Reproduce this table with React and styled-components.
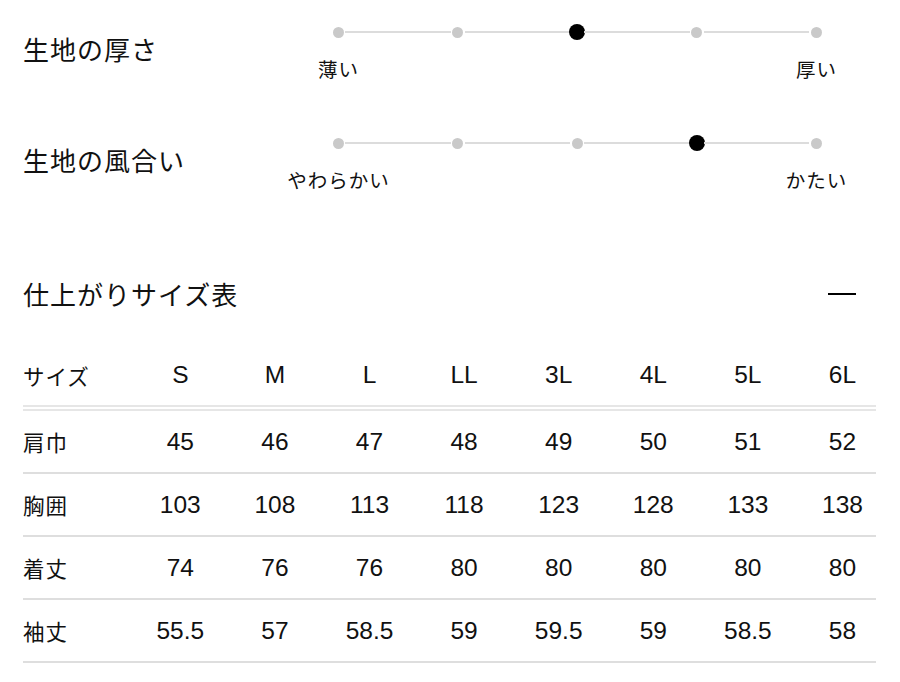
import React from "react";
import styled, { createGlobalStyle } from "styled-components";

const Global = createGlobalStyle`
  html, body { margin: 0; padding: 0; background: #fff; }
  body { font-family: "Liberation Sans", "Noto Sans CJK JP", sans-serif; color: #111; }
`;

const Page = styled.div`
  width: 900px;
  height: 682px;
  box-sizing: border-box;
  padding: 24px 24px 0 23px;
  overflow: hidden;
`;

const AttrRow = styled.div`
  display: flex;
  align-items: flex-start;
  margin-bottom: ${(p) => p.$gap || 0}px;
`;

const AttrTitle = styled.div`
  width: 307px;
  margin-top: 7px;
  font-family: "Noto Sans CJK JP", sans-serif;
  font-size: 26px;
  line-height: 36px;
  letter-spacing: 1px;
  color: #111;
`;

const Slider = styled.div`
  width: 494px;
  display: flex;
  flex-direction: column;
`;

const DotRow = styled.div`
  display: flex;
  align-items: center;
  height: 16px;
`;

const DotCell = styled.div`
  width: 16px;
  height: 16px;
  flex: none;
  display: flex;
  align-items: center;
  justify-content: center;
`;

const Dot = styled.span`
  display: block;
  border-radius: 50%;
  width: ${(p) => (p.$active ? 16 : 11)}px;
  height: ${(p) => (p.$active ? 16 : 11)}px;
  background: ${(p) => (p.$active ? "#000" : "#c9c9c9")};
`;

const Segment = styled.span`
  flex: 1;
  height: 2px;
  background: #dcdcdc;
  margin: 0 -1px;
`;

const LabelRow = styled.div`
  display: flex;
  justify-content: space-between;
  margin: 17px -52px 0;
`;

const EndLabel = styled.span`
  width: 120px;
  text-align: center;
  font-family: "Noto Sans CJK JP", sans-serif;
  font-size: 19.5px;
  line-height: 24px;
  letter-spacing: 1px;
  text-indent: 1px;
  color: #111;
`;

const TableHead = styled.div`
  display: flex;
  align-items: center;
  justify-content: space-between;
  height: 36px;
  margin-top: 84px;
`;

const TableTitle = styled.h2`
  margin: 0;
  font-family: "Noto Sans CJK JP", sans-serif;
  font-weight: 400;
  font-size: 26px;
  line-height: 36px;
  letter-spacing: 1px;
  color: #111;
`;

const Toggle = styled.button`
  width: 28px;
  height: 20px;
  margin-right: 20px;
  padding: 0;
  border: 0;
  background: transparent;
  display: flex;
  align-items: center;
  cursor: pointer;
  &::before {
    content: "";
    display: block;
    width: 28px;
    height: 2px;
    background: #000;
  }
`;

const Table = styled.div`
  margin-top: 33px;
  width: 853px;
`;

const Row = styled.div`
  display: grid;
  grid-template-columns: 110px repeat(8, 94.6px);
  align-items: center;
  height: ${(p) => (p.$head ? 60 : 61)}px;
  border-bottom: ${(p) => (p.$head ? "6px double #e6e6e6" : "2px solid #dedede")};
`;

const RowLabel = styled.div`
  font-family: "Noto Sans CJK JP", sans-serif;
  font-size: 21.5px;
  letter-spacing: 1px;
  color: #111;
`;

const Cell = styled.div`
  text-align: center;
  font-family: "Liberation Sans", "Noto Sans CJK JP", sans-serif;
  font-size: 24.5px;
  color: #111;
`;

const attrs = [
  { title: "生地の厚さ", active: 2, left: "薄い", right: "厚い", gap: 54 },
  { title: "生地の風合い", active: 3, left: "やわらかい", right: "かたい", gap: 0 },
];

const sizes = ["S", "M", "L", "LL", "3L", "4L", "5L", "6L"];
const rows = [
  { label: "肩巾", values: ["45", "46", "47", "48", "49", "50", "51", "52"] },
  { label: "胸囲", values: ["103", "108", "113", "118", "123", "128", "133", "138"] },
  { label: "着丈", values: ["74", "76", "76", "80", "80", "80", "80", "80"] },
  { label: "袖丈", values: ["55.5", "57", "58.5", "59", "59.5", "59", "58.5", "58"] },
];

function Scale({ active }) {
  const items = [];
  for (let i = 0; i < 5; i++) {
    if (i > 0) items.push(<Segment key={"s" + i} />);
    items.push(
      <DotCell key={"d" + i}>
        <Dot $active={i === active} />
      </DotCell>
    );
  }
  return <DotRow>{items}</DotRow>;
}

export default function App() {
  return (
    <>
      <Global />
      <Page>
        {attrs.map((a) => (
          <AttrRow key={a.title} $gap={a.gap}>
            <AttrTitle>{a.title}</AttrTitle>
            <Slider>
              <Scale active={a.active} />
              <LabelRow>
                <EndLabel>{a.left}</EndLabel>
                <EndLabel>{a.right}</EndLabel>
              </LabelRow>
            </Slider>
          </AttrRow>
        ))}
        <TableHead>
          <TableTitle>仕上がりサイズ表</TableTitle>
          <Toggle aria-label="閉じる" />
        </TableHead>
        <Table>
          <Row $head>
            <RowLabel>サイズ</RowLabel>
            {sizes.map((s) => (
              <Cell key={s}>{s}</Cell>
            ))}
          </Row>
          {rows.map((r) => (
            <Row key={r.label}>
              <RowLabel>{r.label}</RowLabel>
              {r.values.map((v, i) => (
                <Cell key={i}>{v}</Cell>
              ))}
            </Row>
          ))}
        </Table>
      </Page>
    </>
  );
}
